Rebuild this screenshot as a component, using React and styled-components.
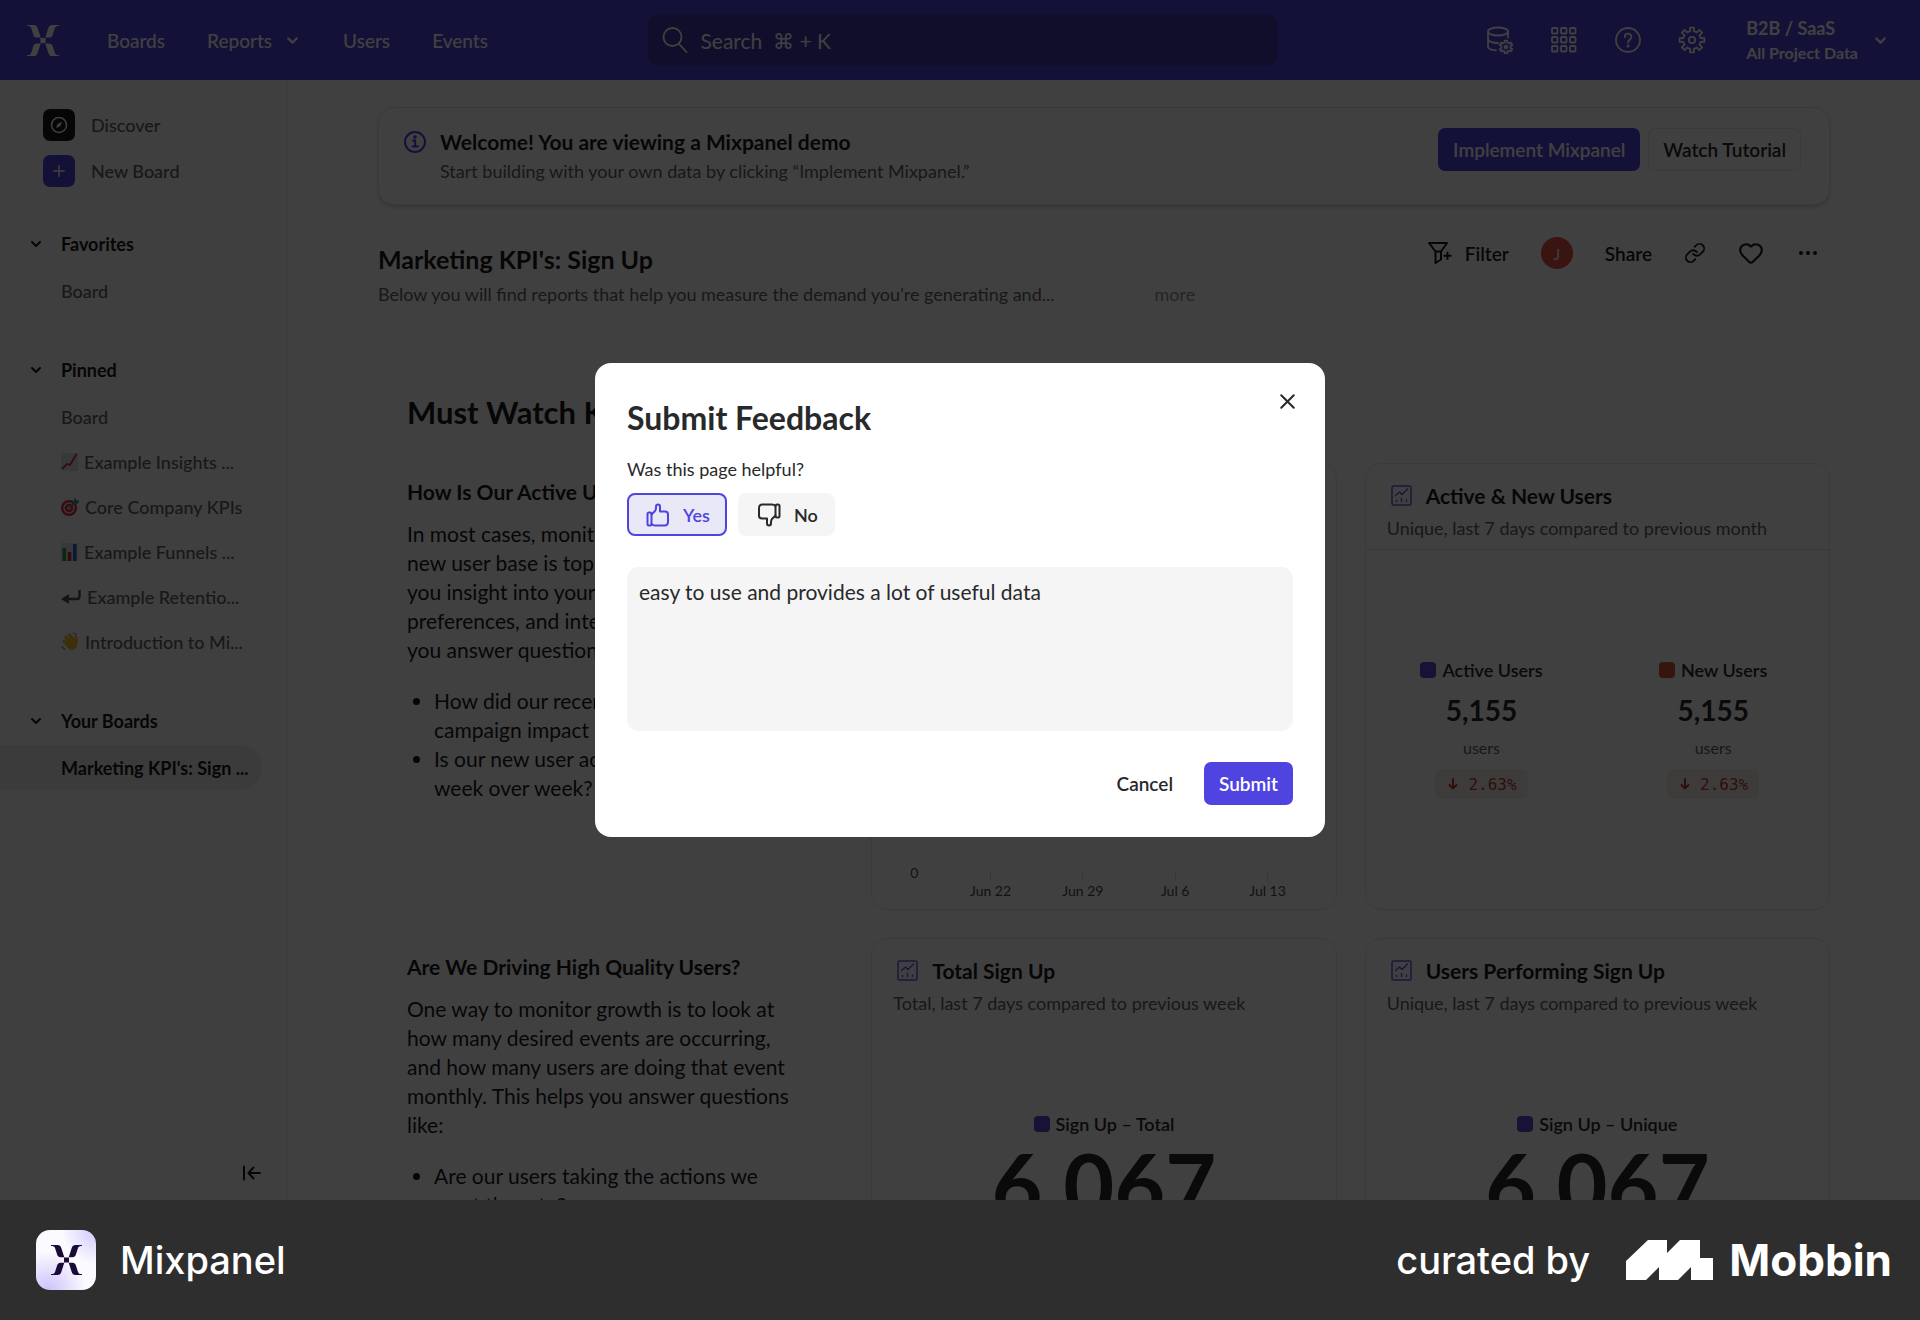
import { useState } from "react";
import styled, { createGlobalStyle } from "styled-components";
import { ChevronDown, Ellipsis, Heart, Link as LinkIcon, Plus, X } from "lucide-react";

const GlobalStyle = createGlobalStyle`
    *, *::before, *::after {
        box-sizing: border-box;
    }
    body {
        margin: 0;
        font-family: Lato, "Liberation Sans", "DejaVu Sans", sans-serif;
        color: #28292b;
    }
    h1, h2, h3, p, ul {
        margin: 0;
        padding: 0;
    }
    button, input, textarea {
        font-family: inherit;
    }
`;

const Page = styled.div`
    display: flex;
    flex-direction: column;
    height: 100vh;
`;
const Stage = styled.div`
    position: relative;
    display: flex;
    flex-direction: column;
    flex: 1;
    min-height: 0;
    overflow: hidden;
    background-color: white;
`;

/* Top bar */
const TopBar = styled.header`
    display: grid;
    grid-template-columns: 1fr minmax(200px, 630px) 1fr;
    align-items: center;
    flex-shrink: 0;
    height: 80px;
    padding: 0 22px 0 27px;
    background-color: #4f44e0;
    color: white;
`;
const Nav = styled.nav`
    display: flex;
    align-items: center;
    gap: 42px;
`;
const NavLink = styled.a`
    display: flex;
    align-items: center;
    gap: 12px;
    color: white;
    font-size: 19px;
    font-weight: 500;
    text-decoration: none;
`;
const HomeLink = styled.a`
    display: flex;
    margin-right: 6px;
    color: white;
`;
const SearchBox = styled.label`
    display: flex;
    align-items: center;
    gap: 10px;
    height: 52px;
    padding: 0 13px;
    border-radius: 10px;
    background-color: #4338ae;
`;
const SearchInput = styled.input`
    flex: 1;
    min-width: 0;
    border: none;
    outline: none;
    background: transparent;
    color: white;
    font-size: 21px;
    &::placeholder {
        color: white;
        opacity: 1;
    }
`;
const TopActions = styled.div`
    display: flex;
    align-items: center;
    justify-content: flex-end;
    gap: 36px;
    padding-right: 9px;
`;
const IconButton = styled.button`
    display: flex;
    padding: 0;
    border: none;
    background: none;
    color: inherit;
    cursor: pointer;
`;
const ProjectButton = styled.button`
    display: flex;
    align-items: center;
    gap: 14px;
    padding: 0;
    margin-left: 4px;
    border: none;
    background: none;
    color: white;
    text-align: left;
    cursor: pointer;
`;
const ProjectName = styled.span`
    display: block;
    font-size: 18px;
    line-height: 25px;
    font-weight: 700;
`;
const ProjectData = styled.span`
    display: block;
    font-size: 16px;
    line-height: 24px;
    font-weight: 700;
`;

/* Sidebar */
const Body = styled.div`
    display: flex;
    flex: 1;
    min-height: 0;
`;
const Sidebar = styled.aside`
    display: flex;
    flex-direction: column;
    flex-shrink: 0;
    width: 288px;
    padding: 22px 25px 17px 0;
    border-right: 1px solid #ededf0;
    background-color: #f9f9fa;
`;
const SideAction = styled.a`
    display: flex;
    align-items: center;
    gap: 16px;
    height: 46px;
    padding-left: 43px;
    color: #626266;
    font-size: 18px;
    font-weight: 500;
    text-decoration: none;
`;
const SideTile = styled.span`
    display: flex;
    align-items: center;
    justify-content: center;
    width: 32px;
    height: 32px;
    border-radius: 7px;
    background-color: ${(props) => props.$color};
    color: white;
`;
const SideSection = styled.section`
    padding: 25px 0 7px;
`;
const SideHeading = styled.h2`
    display: flex;
    align-items: center;
    gap: 17px;
    height: 49px;
    padding-left: 28px;
    font-size: 18px;
    font-weight: 700;
    color: #1b1b1f;
`;
const SideItem = styled.a`
    display: flex;
    align-items: center;
    gap: 6px;
    height: 45px;
    padding: 0 6px 0 61px;
    color: ${(props) => (props.$active ? "#1b1b1f" : "#626266")};
    background-color: ${(props) => (props.$active ? "#ebebed" : "transparent")};
    border-radius: 0 22px 22px 0;
    font-size: 18px;
    font-weight: ${(props) => (props.$active ? 700 : 500)};
    text-decoration: none;
    white-space: nowrap;
    svg {
        flex-shrink: 0;
    }
`;
const CollapseButton = styled(IconButton)`
    margin-top: auto;
    align-self: flex-end;
    color: #1b1b1f;
`;

/* Board */
const Main = styled.main`
    flex: 1;
    min-width: 0;
    padding: 27px 90px 0;
`;
const Banner = styled.section`
    display: flex;
    align-items: flex-start;
    height: 98px;
    padding: 20px 28px 0 24px;
    border: 1px solid #e6e6ea;
    border-radius: 16px;
    box-shadow: 0 2px 4px rgba(0, 0, 0, 0.2);
`;
const BannerIcon = styled.span`
    display: flex;
    padding-top: 2px;
    color: #4f44e0;
`;
const BannerText = styled.div`
    flex: 1;
    margin-left: 13px;
`;
const BannerTitle = styled.h2`
    font-size: 21px;
    line-height: 28px;
    font-weight: 700;
    color: #1b1b1f;
`;
const Muted = styled.p`
    font-size: 18px;
    line-height: 30px;
    color: #626266;
`;
const BannerButtons = styled.div`
    display: flex;
    gap: 8px;
`;
const Button = styled.button`
    height: 43px;
    padding: 0 14px;
    border: 1px solid ${(props) => (props.$outlined ? "#e6e6ea" : "transparent")};
    border-radius: 7px;
    background-color: ${(props) => (props.$primary ? "#4f44e0" : "transparent")};
    color: ${(props) => (props.$primary ? "white" : "#28292b")};
    font-size: 19px;
    font-weight: 600;
    cursor: pointer;
`;
const BoardHeader = styled.div`
    display: flex;
    justify-content: space-between;
    margin-top: 28px;
`;
const BoardTitle = styled.h1`
    padding-top: 9px;
    font-size: 25px;
    line-height: 34px;
    font-weight: 700;
    color: #1b1b1f;
`;
const Description = styled.div`
    display: flex;
    align-items: center;
    gap: 100px;
    height: 36px;
`;
const MoreButton = styled.button`
    padding: 0;
    border: none;
    background: none;
    color: #8f8f95;
    font-size: 18px;
    cursor: pointer;
`;
const Toolbar = styled.div`
    display: flex;
    align-items: center;
    gap: 32px;
    height: 40px;
    padding-right: 10px;
    color: #1b1b1f;
`;
const ToolButton = styled.button`
    display: flex;
    align-items: center;
    gap: 12px;
    padding: 0;
    border: none;
    background: none;
    color: inherit;
    font-size: 19px;
    font-weight: 600;
    cursor: pointer;
`;
const Avatar = styled.span`
    display: flex;
    align-items: center;
    justify-content: center;
    width: 32px;
    height: 32px;
    border-radius: 50%;
    background-color: #e34f44;
    color: white;
    font-size: 16px;
`;
const SectionTitle = styled.h2`
    padding: 78px 29px 0;
    font-size: 31px;
    line-height: 44px;
    font-weight: 700;
    color: #1b1b1f;
`;
const Grid = styled.div`
    display: grid;
    grid-template-columns: repeat(3, 1fr);
    grid-auto-rows: 447px;
    gap: 28px;
    margin-top: 29px;
`;
const TextCell = styled.div`
    padding: 14px 20px 0 29px;
    font-size: 21px;
    line-height: 29px;
    color: #1b1b1f;
`;
const TextHeading = styled.h3`
    margin-bottom: 12px;
    font-size: 21px;
    line-height: 30px;
    font-weight: 700;
`;
const Bullets = styled.ul`
    margin-top: 22px;
    padding-left: 27px;
`;
const Card = styled.section`
    display: flex;
    flex-direction: column;
    border: 1px solid #e6e6ea;
    border-radius: 16px;
`;
const CardHeader = styled.div`
    padding: 14px 20px 6px 21px;
    border-bottom: 1px solid ${(props) => (props.$divider ? "#e0e0e5" : "transparent")};
`;
const CardTitle = styled.h3`
    display: flex;
    align-items: center;
    gap: 11px;
    height: 35px;
    font-size: 21px;
    font-weight: 700;
    color: #1b1b1f;
    svg {
        color: #6a5cf0;
    }
`;
const Metrics = styled.div`
    display: grid;
    grid-auto-flow: column;
    grid-auto-columns: 1fr;
    padding-top: ${(props) => props.$top}px;
`;
const Metric = styled.div`
    display: flex;
    flex-direction: column;
    align-items: center;
    color: #28292b;
`;
const MetricLabel = styled.div`
    display: flex;
    align-items: center;
    gap: 6px;
    height: 28px;
    font-size: 18px;
    font-weight: 600;
`;
const Swatch = styled.span`
    width: 16px;
    height: 16px;
    border-radius: 4px;
    background-color: ${(props) => props.$color};
`;
const MetricValue = styled.div`
    font-size: ${(props) => (props.$big ? 88 : 28)}px;
    line-height: ${(props) => (props.$big ? 92 : 52)}px;
    font-weight: 700;
`;
const MetricUnit = styled.div`
    font-size: 16px;
    line-height: 24px;
    color: #626266;
`;
const Change = styled.div`
    display: flex;
    align-items: center;
    gap: 8px;
    height: 30px;
    margin-top: 9px;
    padding: 0 11px;
    border-radius: 6px;
    background-color: #f6f0ec;
    color: #c0382e;
    font-family: "DejaVu Sans Mono", "Liberation Mono", monospace;
    font-size: 16px;
`;
const Chart = styled.div`
    display: flex;
    flex: 1;
    align-items: flex-end;
    padding: 0 22px 8px 38px;
    color: #4a4a50;
    font-size: 14px;
    line-height: 20px;
`;
const AxisZero = styled.span`
    width: 34px;
    padding-bottom: 18px;
`;
const Axis = styled.div`
    display: grid;
    grid-template-columns: repeat(4, 1fr);
    flex: 1;
`;
const Tick = styled.div`
    display: flex;
    flex-direction: column;
    align-items: center;
    &::before {
        content: "";
        width: 1px;
        height: 10px;
        background-color: #dcdce0;
    }
`;

/* Feedback dialog */
const Overlay = styled.div`
    position: absolute;
    inset: 0;
    display: flex;
    align-items: center;
    justify-content: center;
    background-color: rgba(0, 0, 0, 0.75);
`;
const Dialog = styled.form`
    width: 730px;
    max-width: 94%;
    padding: 24px 32px 32px;
    border-radius: 16px;
    background-color: white;
`;
const DialogTop = styled.div`
    display: flex;
    justify-content: space-between;
    align-items: flex-start;
`;
const DialogTitle = styled.h2`
    padding-top: 9px;
    font-size: 32px;
    line-height: 44px;
    font-weight: 700;
`;
const CloseButton = styled(IconButton)`
    margin: 2px -7px 0 0;
`;
const Question = styled.p`
    margin-top: 16px;
    font-size: 18px;
    line-height: 26px;
`;
const Choices = styled.div`
    display: flex;
    gap: 11px;
    margin-top: 11px;
`;
const Choice = styled.button`
    display: flex;
    align-items: center;
    gap: 13px;
    height: 43px;
    padding: 0 15px 0 17px;
    border: 2px solid ${(props) => (props["aria-pressed"] ? "#4f44e0" : "#f5f5f5")};
    border-radius: 8px;
    background-color: ${(props) => (props["aria-pressed"] ? "#e9e8f6" : "#f5f5f5")};
    color: ${(props) => (props["aria-pressed"] ? "#4f44e0" : "#28292b")};
    font-size: 18px;
    font-weight: 600;
    cursor: pointer;
`;
const Comment = styled.textarea`
    display: block;
    width: 100%;
    height: 164px;
    margin-top: 31px;
    padding: 10px 12px;
    border: none;
    border-radius: 12px;
    outline: none;
    resize: none;
    background-color: #f5f5f5;
    color: #28292b;
    font-size: 21px;
    line-height: 30px;
`;
const DialogButtons = styled.div`
    display: flex;
    justify-content: flex-end;
    gap: 16px;
    margin-top: 31px;
`;

/* Credit bar */
const CreditBar = styled.footer`
    display: flex;
    align-items: center;
    justify-content: space-between;
    flex-shrink: 0;
    height: 120px;
    padding: 0 28px 0 36px;
    background-color: #2e2e2e;
    color: white;
    font-family: Inter, sans-serif;
    font-size: 38px;
    font-weight: 500;
`;
const Credit = styled.div`
    display: flex;
    align-items: center;
    gap: ${(props) => props.$gap}px;
`;
const AppTile = styled.span`
    display: flex;
    align-items: center;
    justify-content: center;
    width: 60px;
    height: 60px;
    border-radius: 14px;
    background: radial-gradient(circle at 100% 0, #cfc8fb 0, transparent 40%),
        radial-gradient(circle at 20% 100%, #cbc3fb 0, transparent 50%), #fbfaff;
    color: #1b0b3b;
`;
const Brand = styled.span`
    font-size: 44px;
    font-weight: 700;
`;

const ARM = "M0 0h6.5c2.2 0 3.1 1 3.8 3l3 9.2H9.6c-2 0-2.9-1-3.5-2.8L4 3C3.4 1.300 2.500.900 0 .900z";

function MixpanelLogo({ width, height }) {
    return (
        <svg width={width} height={height} viewBox="0 0 31 30" fill="currentColor" aria-hidden="true">
            <path d={ARM} />
            <path d={ARM} transform="matrix(-1 0 0 1 31 0)" />
            <path d={ARM} transform="matrix(1 0 0 -1 0 30)" />
            <path d={ARM} transform="matrix(-1 0 0 -1 31 30)" />
            <rect x="13" y="12.500" width="5" height="5" />
        </svg>
    );
}

// Outline of a cog with flat teeth around (cx, cy)
function cogPath(cx, cy, outer, inner, teeth) {
    const step = (Math.PI * 2) / teeth;
    const points = [];
    for (let i = 0; i < teeth; i++) {
        const a = i * step - Math.PI / 2;
        [[-0.26, inner], [-0.2, outer], [0.2, outer], [0.26, inner]].forEach(([k, r]) => {
            points.push(`${(cx + r * Math.cos(a + k * step)).toFixed(2)} ${(cy + r * Math.sin(a + k * step)).toFixed(2)}`);
        });
    }
    return `M${points.join("L")}Z`;
}

function Icon({ size = 28, width = 1.8, children }) {
    return (
        <svg
            width={size}
            height={size}
            viewBox={`0 0 ${size} ${size}`}
            fill="none"
            stroke="currentColor"
            strokeWidth={width}
            strokeLinecap="round"
            strokeLinejoin="round"
            aria-hidden="true"
        >
            {children}
        </svg>
    );
}

const SearchIcon = () => (
    <Icon>
        <circle cx="11.500" cy="11" r="9" />
        <path d="M18 18l7.500 8" />
    </Icon>
);

const DataIcon = () => (
    <Icon>
        <ellipse cx="12" cy="5.500" rx="10" ry="4" />
        <path d="M2 5.500v15c0 2 3.500 3.500 8 3.800M22 5.500v6M2 13c0 2.200 4.500 4 10 4" />
        <path d={cogPath(20, 21, 6.6, 4.8, 6)} />
        <circle cx="20" cy="21" r="1.300" />
    </Icon>
);

const GridIcon = () => (
    <Icon>
        {[2, 11, 20].map((y) => [2, 11, 20].map((x) => <rect key={`${x}-${y}`} x={x} y={y} width="5.500" height="5.500" rx="1" />))}
    </Icon>
);

const HelpIcon = () => (
    <Icon>
        <circle cx="14" cy="14" r="12" />
        <path d="M10.800 11c0-4.400 6.600-4.300 6.600-.2 0 2.600-3.300 2.900-3.300 5.700" />
        <circle cx="14" cy="20" r=".6" fill="currentColor" />
    </Icon>
);

const SettingsIcon = () => (
    <Icon>
        <path d={cogPath(14, 14, 12.6, 9, 8)} />
        <circle cx="14" cy="14" r="3.200" />
    </Icon>
);

const InfoIcon = () => (
    <Icon size={24} width={2}>
        <circle cx="12" cy="12" r="10" />
        <path d="M10 10.500h2.200v6M9.500 16.500h5.400" />
        <circle cx="12" cy="7" r=".8" fill="currentColor" />
    </Icon>
);

const CompassIcon = () => (
    <Icon size={20} width={1.5}>
        <circle cx="10" cy="10" r="7.500" />
        <path d="M13 7l-1.800 4.200L7 13l1.800-4.200z" fill="currentColor" strokeWidth="0" />
    </Icon>
);

const FilterIcon = () => (
    <Icon size={26} width={2}>
        <path d="M2 3h18l-6 8.500v8L8.500 23V11.500z" />
        <path d="M8.500 11.500H14M20.500 12.500v6.400M17.300 15.700h6.400" />
    </Icon>
);

const ThumbIcon = ({ down }) => (
    <Icon size={24} width={2}>
        <g transform={down ? "rotate(180 12 12)" : undefined}>
            <rect x="1.500" y="9.500" width="4" height="13" rx="1.500" />
            <path d="M5.500 11.500L9 8c.8-.8 1-2 1-3.500V3.700c0-3 4-3 4 0v4.800h5c2 0 3 1.200 3 2.800v7.500c0 2.200-1.300 3.700-3.400 3.700H9c-1.500 0-2.500-.5-3.500-1.500" />
        </g>
    </Icon>
);

const CollapseIcon = () => (
    <Icon size={20} width={2}>
        <path d="M2 3.500v13M18 10H7M11.500 4.500L6.500 10l5 5.500" />
    </Icon>
);

const ReportIcon = () => (
    <Icon size={28} width={1.5}>
        <rect x="5" y="4" width="19" height="19" rx="1.500" />
        <path d="M8.500 13.500l4-3.500 2.500 2.500 5.500-5.500M9.500 18.500v1M14.500 16.500v3M19.500 18v1.500" />
    </Icon>
);

const RowIcon = ({ kind }) => {
    if (kind === "chart") {
        return (
            <svg width="17" height="18" viewBox="0 0 17 18" aria-hidden="true">
                <rect width="17" height="18" fill="#d5dde3" />
                <path d="M1 16l5-5 3 1 6.500-11" stroke="#d6283b" strokeWidth="1.800" fill="none" />
            </svg>
        );
    }
    if (kind === "target") {
        return (
            <svg width="18" height="18" viewBox="0 0 18 18" aria-hidden="true">
                <circle cx="8" cy="10" r="8" fill="#d6283b" />
                <circle cx="8" cy="10" r="5" fill="none" stroke="#ecd9d9" strokeWidth="1.500" />
                <circle cx="8" cy="10" r="1.800" fill="#ecd9d9" />
                <path d="M8 10l6-6M13 4l1-3 1 2 3 0-2.500 2.500z" stroke="#2aa295" strokeWidth="1.500" fill="#2aa295" />
            </svg>
        );
    }
    if (kind === "bars") {
        return (
            <svg width="17" height="18" viewBox="0 0 17 18" aria-hidden="true">
                <rect width="17" height="18" fill="#d5dde3" />
                <rect x="1.500" y="5" width="3.500" height="13" fill="#1fa83c" />
                <rect x="6.800" y="9" width="3.500" height="9" fill="#d6283b" />
                <rect x="12" y="1" width="3.500" height="17" fill="#2a64d8" />
            </svg>
        );
    }
    if (kind === "return") {
        return (
            <svg width="20" height="16" viewBox="0 0 20 16" aria-hidden="true">
                <path d="M18.500 1v6.500q0 2.500-2.500 2.500H6" stroke="#55555a" strokeWidth="2.400" fill="none" />
                <path d="M8 5v10L0 10z" fill="#55555a" />
            </svg>
        );
    }
    return (
        <svg width="18" height="19" viewBox="0 0 18 19" aria-hidden="true">
            <path
                d="M3 9L7 13M5 5l5 6M8.500 3l5 6M14.800 5.500V13"
                stroke="#f2b632"
                strokeWidth="3.200"
                strokeLinecap="round"
            />
            <path d="M4 10l8-4 4.400-1v8c-1 6-8 6-10 2.500z" fill="#f2b632" />
            <path d="M12 1c2 0 3 1 3.500 2.500M1 14c.5 2 1.500 3 3.500 3.500" stroke="#8c8c92" strokeWidth="1.200" fill="none" />
        </svg>
    );
};

const pinned = [
    { label: "Board" },
    { icon: "chart", label: "Example Insights ..." },
    { icon: "target", label: "Core Company KPIs" },
    { icon: "bars", label: "Example Funnels ..." },
    { icon: "return", label: "Example Retentio..." },
    { icon: "wave", label: "Introduction to Mi..." },
];

function BoardList({ title, items }) {
    return (
        <SideSection>
            <SideHeading><ChevronDown size={16} strokeWidth={3} />{title}</SideHeading>
            {
                items.map((item) => (
                    <SideItem key={item.label} href="#" $active={item.active}>
                        {item.icon && <RowIcon kind={item.icon} />}
                        {item.label}
                    </SideItem>
                ))
            }
        </SideSection>
    );
}

function ReportCard({ title, subtitle, divider, children }) {
    return (
        <Card>
            <CardHeader $divider={divider}>
                <CardTitle><ReportIcon />{title}</CardTitle>
                <Muted>{subtitle}</Muted>
            </CardHeader>
            {children}
        </Card>
    );
}

function UserMetric({ label, color }) {
    return (
        <Metric>
            <MetricLabel><Swatch $color={color} />{label}</MetricLabel>
            <MetricValue>5,155</MetricValue>
            <MetricUnit>users</MetricUnit>
            <Change>
                <Icon size={14} width={2}><path d="M7 2v9M3.500 8L7 11.500 10.500 8" /></Icon>
                2.63%
            </Change>
        </Metric>
    );
}

function FeedbackDialog() {
    const [helpful, setHelpful] = useState(true);
    const [comment, setComment] = useState("easy to use and provides a lot of useful data");

    return (
        <Dialog role="dialog" aria-labelledby="feedback-title" onSubmit={(e) => e.preventDefault()}>
            <DialogTop>
                <DialogTitle id="feedback-title">Submit Feedback</DialogTitle>
                <CloseButton type="button" aria-label="Close"><X size={25} strokeWidth={2} /></CloseButton>
            </DialogTop>
            <Question>Was this page helpful?</Question>
            <Choices>
                <Choice type="button" aria-pressed={helpful} onClick={() => setHelpful(true)}><ThumbIcon />Yes</Choice>
                <Choice type="button" aria-pressed={!helpful} onClick={() => setHelpful(false)}><ThumbIcon down />No</Choice>
            </Choices>
            <Comment aria-label="Feedback" spellCheck={false} value={comment} onChange={(e) => setComment(e.target.value)} />
            <DialogButtons>
                <Button type="button">Cancel</Button>
                <Button type="submit" $primary>Submit</Button>
            </DialogButtons>
        </Dialog>
    );
}

export default function App() {
    return (
        <Page>
            <GlobalStyle />
            <Stage>
                <TopBar>
                    <Nav>
                        <HomeLink href="#" aria-label="Home"><MixpanelLogo width={32} height={31} /></HomeLink>
                        <NavLink href="#">Boards</NavLink>
                        <NavLink href="#">Reports <ChevronDown size={17} strokeWidth={3} /></NavLink>
                        <NavLink href="#">Users</NavLink>
                        <NavLink href="#">Events</NavLink>
                    </Nav>
                    <SearchBox>
                        <SearchIcon />
                        <SearchInput type="text" aria-label="Search" placeholder={"Search\u00a0 ⌘ + K"} />
                    </SearchBox>
                    <TopActions>
                        <IconButton aria-label="Data management"><DataIcon /></IconButton>
                        <IconButton aria-label="Apps"><GridIcon /></IconButton>
                        <IconButton aria-label="Help"><HelpIcon /></IconButton>
                        <IconButton aria-label="Settings"><SettingsIcon /></IconButton>
                        <ProjectButton>
                            <span>
                                <ProjectName>B2B / SaaS</ProjectName>
                                <ProjectData>All Project Data</ProjectData>
                            </span>
                            <ChevronDown size={17} strokeWidth={3} />
                        </ProjectButton>
                    </TopActions>
                </TopBar>

                <Body>
                    <Sidebar>
                        <SideAction href="#"><SideTile $color="#1b1b1f"><CompassIcon /></SideTile>Discover</SideAction>
                        <SideAction href="#"><SideTile $color="#4f44e0"><Plus size={18} /></SideTile>New Board</SideAction>
                        <BoardList title="Favorites" items={[{ label: "Board" }]} />
                        <BoardList title="Pinned" items={pinned} />
                        <BoardList title="Your Boards" items={[{ label: "Marketing KPI's: Sign ...", active: true }]} />
                        <CollapseButton aria-label="Collapse sidebar"><CollapseIcon /></CollapseButton>
                    </Sidebar>

                    <Main>
                        <Banner>
                            <BannerIcon><InfoIcon /></BannerIcon>
                            <BannerText>
                                <BannerTitle>Welcome! You are viewing a Mixpanel demo</BannerTitle>
                                <Muted>Start building with your own data by clicking “Implement Mixpanel.”</Muted>
                            </BannerText>
                            <BannerButtons>
                                <Button $primary>Implement Mixpanel</Button>
                                <Button $outlined>Watch Tutorial</Button>
                            </BannerButtons>
                        </Banner>

                        <BoardHeader>
                            <div>
                                <BoardTitle>Marketing KPI's: Sign Up</BoardTitle>
                                <Description>
                                    <Muted>Below you will find reports that help you measure the demand you’re generating and...</Muted>
                                    <MoreButton>more</MoreButton>
                                </Description>
                            </div>
                            <Toolbar>
                                <ToolButton><FilterIcon />Filter</ToolButton>
                                <Avatar>J</Avatar>
                                <ToolButton>Share</ToolButton>
                                <IconButton aria-label="Copy link"><LinkIcon size={22} /></IconButton>
                                <IconButton aria-label="Favorite"><Heart size={26} /></IconButton>
                                <IconButton aria-label="More options"><Ellipsis size={24} strokeWidth={2} /></IconButton>
                            </Toolbar>
                        </BoardHeader>

                        <SectionTitle>Must Watch KPIs</SectionTitle>
                        <Grid>
                            <TextCell>
                                <TextHeading>How Is Our Active User Base Growing?</TextHeading>
                                <p>
                                    In most cases, monitoring your<br />
                                    new user base is top of mind. To give<br />
                                    you insight into your users, their<br />
                                    preferences, and interests to help<br />
                                    you answer questions like:
                                </p>
                                <Bullets>
                                    <li>How did our recent marketing<br />campaign impact new users?</li>
                                    <li>Is our new user activity growing<br />week over week?</li>
                                </Bullets>
                            </TextCell>
                            <ReportCard title="Active Users Over Time" subtitle="Unique, last 30 days">
                                <Chart>
                                    <AxisZero>0</AxisZero>
                                    <Axis>
                                        <Tick>Jun 22</Tick>
                                        <Tick>Jun 29</Tick>
                                        <Tick>Jul 6</Tick>
                                        <Tick>Jul 13</Tick>
                                    </Axis>
                                </Chart>
                            </ReportCard>
                            <ReportCard title="Active & New Users" subtitle="Unique, last 7 days compared to previous month" divider>
                                <Metrics $top={106}>
                                    <UserMetric label="Active Users" color="#5b4ad6" />
                                    <UserMetric label="New Users" color="#d4583f" />
                                </Metrics>
                            </ReportCard>

                            <TextCell>
                                <TextHeading>Are We Driving High Quality Users?</TextHeading>
                                <p>
                                    One way to monitor growth is to look at<br />
                                    how many desired events are occurring,<br />
                                    and how many users are doing that event<br />
                                    monthly. This helps you answer questions<br />
                                    like:
                                </p>
                                <Bullets>
                                    <li>Are our users taking the actions we<br />want them to?</li>
                                </Bullets>
                            </TextCell>
                            <ReportCard title="Total Sign Up" subtitle="Total, last 7 days compared to previous week">
                                <Metrics $top={85}>
                                    <Metric>
                                        <MetricLabel><Swatch $color="#5b4ad6" />Sign Up – Total</MetricLabel>
                                        <MetricValue $big>6,067</MetricValue>
                                    </Metric>
                                </Metrics>
                            </ReportCard>
                            <ReportCard title="Users Performing Sign Up" subtitle="Unique, last 7 days compared to previous week">
                                <Metrics $top={85}>
                                    <Metric>
                                        <MetricLabel><Swatch $color="#5b4ad6" />Sign Up – Unique</MetricLabel>
                                        <MetricValue $big>6,067</MetricValue>
                                    </Metric>
                                </Metrics>
                            </ReportCard>
                        </Grid>
                    </Main>
                </Body>

                <Overlay>
                    <FeedbackDialog />
                </Overlay>
            </Stage>

            <CreditBar>
                <Credit $gap={24}>
                    <AppTile><MixpanelLogo width={31} height={30} /></AppTile>
                    Mixpanel
                </Credit>
                <Credit $gap={36}>
                    curated by
                    <Credit $gap={15}>
                        <svg width="88" height="40" viewBox="0 0 88 40" fill="white" aria-hidden="true">
                            <path d="M22 0h19v13L54 0h20v18h13v22H65V27L52 40H33V27L20 40H0V21z" />
                        </svg>
                        <Brand>Mobbin</Brand>
                    </Credit>
                </Credit>
            </CreditBar>
        </Page>
    );
}
